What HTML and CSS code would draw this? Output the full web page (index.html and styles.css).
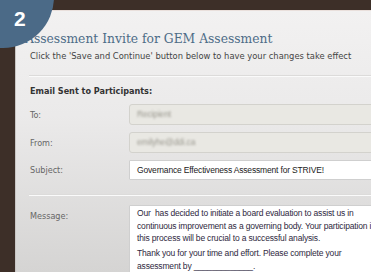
FILE: index.html
```html
<!DOCTYPE html>
<html>
<head>
<meta charset="utf-8">
<link rel="stylesheet" href="styles.css">
</head>
<body>
<div class="panel">
  <h1 class="title">Assessment Invite for GEM Assessment</h1>
  <p class="hint">Click the 'Save and Continue' button below to have your changes take effect</p>
  <div class="rule"></div>
  <h2 class="section">Email Sent to Participants:</h2>
  <div class="form">
    <label class="lbl">To:</label>
    <div class="field disabled"><span class="blur">Recipient</span></div>
    <label class="lbl">From:</label>
    <div class="field disabled"><span class="blur">emilyhe@ddi.ca</span></div>
    <label class="lbl">Subject:</label>
    <div class="field subject">Governance Effectiveness Assessment for STRIVE!</div>
  </div>
  <div class="rule rule2"></div>
  <div class="form msg-row">
    <label class="lbl">Message:</label>
    <div class="field message">
      <p>Our&nbsp; has decided to initiate a board evaluation to assist us in<br>continuous improvement as a governing body. Your participation in<br>this process will be crucial to a successful analysis.</p>
      <p>Thank you for your time and effort. Please complete your<br>assessment by _____________.</p>
    </div>
  </div>
</div>
<svg class="badge" width="60" height="56" viewBox="0 0 60 56"><circle cx="3" cy="-3" r="51" fill="#4b6a87"/></svg>
<div class="badge-num">2</div>
</body>
</html>
```
FILE: styles.css
```css
html, body {
  margin: 0;
  padding: 0;
}
body {
  width: 371px;
  height: 272px;
  overflow: hidden;
  background: #3d2f28;
  position: relative;
  padding: 10px 0 0 15px;
  box-sizing: border-box;
}
.panel {
  height: 262px;
  box-sizing: border-box;
  padding: 18px 0 0 14px;
  background: linear-gradient(#f2f1f1, #ebeaea 40%, #d5d4d3);
  border-top: 1px solid #e9dfdb;
  border-left: 1px solid #c9c6c4;
  overflow: hidden;
}
.title {
  margin: 0 0 0 -5px;
  font-family: "DejaVu Serif Condensed", "DejaVu Serif", serif;
  font-weight: normal;
  font-size: 13.7px;
  line-height: 18px;
  color: #4d6c87;
  white-space: nowrap;
}
.hint {
  margin: 3px 0 0;
  font-family: "DejaVu Sans Condensed", "DejaVu Sans", sans-serif;
  font-size: 9.3px;
  line-height: 12px;
  color: #444;
  white-space: nowrap;
}
.rule {
  height: 1px;
  background: #dcdbda;
  border-bottom: 1px solid #fafafa;
  margin: 13px 0 0 -1px;
}
.section {
  margin: 8px 0 0;
  font-family: "DejaVu Sans Condensed", "DejaVu Sans", sans-serif;
  font-size: 9px;
  font-weight: bold;
  line-height: 12px;
  color: #333;
}
.form {
  display: grid;
  grid-template-columns: 99px 260px;
  row-gap: 7px;
  margin-top: 7px;
  align-items: center;
}
.lbl {
  font-family: "DejaVu Sans Condensed", "DejaVu Sans", sans-serif;
  font-size: 9px;
  color: #666;
  line-height: 12px;
}
.field {
  box-sizing: border-box;
  height: 21px;
  border: 1px solid #d3d2cd;
  border-radius: 3px;
  padding: 0 7px;
  font-family: "Liberation Sans", Arial, sans-serif;
  font-size: 8.5px;
  letter-spacing: -0.17px;
  line-height: 19px;
  white-space: nowrap;
}
.disabled {
  background: #e9e8e3;
}
.blur {
  color: #9a988f;
  filter: blur(1.3px);
  display: inline-block;
}
.subject {
  background: #fff;
  border-color: #cfcfcf;
  border-radius: 1px;
  color: #222;
  height: 20px;
}
.rule2 {
  margin-top: 14px;
}
.msg-row {
  margin-top: 9px;
  align-items: start;
}
.msg-row .lbl {
  margin-top: 5px;
}
.message {
  height: 80px;
  background: #fff;
  border-color: #cfcfcf;
  border-radius: 1px;
  color: #2e2840;
  padding: 1px 7px;
  line-height: 12.7px;
  width: 260px;
}
.message p {
  margin: 0 0 2px;
}
.badge {
  position: absolute;
  left: 0;
  top: 0;
  display: block;
}
.badge-num {
  position: absolute;
  left: 14px;
  top: 7px;
  font-family: "Liberation Sans", Arial, sans-serif;
  font-weight: bold;
  font-size: 21px;
  line-height: 24px;
  color: #fff;
}
```
